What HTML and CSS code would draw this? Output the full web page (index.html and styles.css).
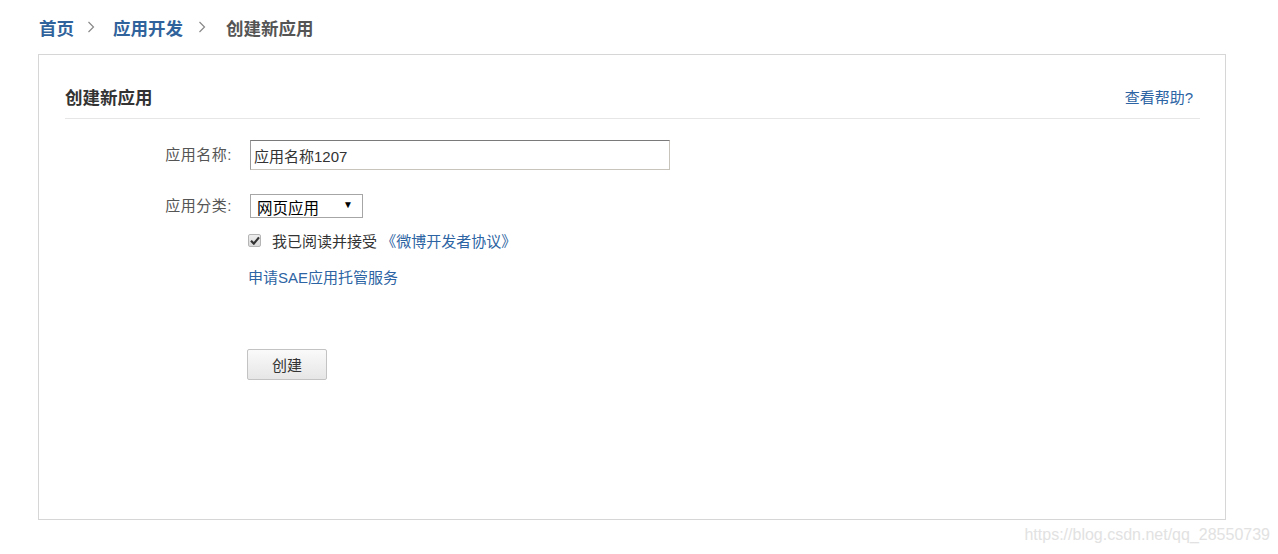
FILE: index.html
```html
<!DOCTYPE html>
<html lang="zh-CN">
<head>
    <meta charset="UTF-8">
    <title>创建新应用</title>
    <link rel="stylesheet" href="styles.css">
</head>
<body>

    <!-- 面包屑 -->
    <div class="crumbs">
        <a href="#">首页</a>
        <svg class="sep" width="8" height="12" viewBox="0 0 8 12">
            <path d="M1.5 1 L6.5 6 L1.5 11" fill="none" stroke="#888" stroke-width="1.2"/>
        </svg>
        <a href="#">应用开发</a>
        <svg class="sep sep-last" width="8" height="12" viewBox="0 0 8 12">
            <path d="M1.5 1 L6.5 6 L1.5 11" fill="none" stroke="#888" stroke-width="1.2"/>
        </svg>
        <span class="current">创建新应用</span>
    </div>

    <div class="panel">
        <div class="panel-head">
            <h3>创建新应用</h3>
            <a href="#" class="help">查看帮助?</a>
        </div>

        <div class="form">
            <label class="lbl">应用名称:</label>
            <div class="field"><input type="text" class="name-input" value="应用名称1207"></div>

            <label class="lbl lbl-select">应用分类:</label>
            <div class="field">
                <div class="fake-select">
                    <span>网页应用</span>
                    <span class="arrow">▼</span>
                </div>
            </div>

            <div></div>
            <div class="agree">
                <span class="check">
                    <svg width="10" height="9" viewBox="0 0 10 9">
                        <path d="M1 4.8 L3.8 7.6 L9 1.4" fill="none" stroke="#333" stroke-width="2.2"/>
                    </svg>
                </span>
                <span>我已阅读并接受 <a href="#">《微博开发者协议》</a></span>
            </div>

            <div></div>
            <div class="sae"><a href="#">申请SAE应用托管服务</a></div>

            <div></div>
            <div class="actions"><button>创建</button></div>
        </div>
    </div>

    <div class="mark">https://blog.csdn.net/qq_28550739</div>

</body>
</html>
```

FILE: styles.css
```css
body {
    margin: 0;
    font-family: "Liberation Sans", "Noto Sans CJK SC", sans-serif;
    font-size: 15px;
    color: #333;
    background: #fff;
}

a {
    color: #2d64a3;
    text-decoration: none;
}

.crumbs {
    height: 54px;
    padding-left: 39px;
    display: flex;
    align-items: center;
    font-size: 17.5px;
    font-weight: bold;
}

.crumbs a {
    color: #30639b;
}

.crumbs .sep {
    margin: 0 18px 0 13px;
}

.crumbs .sep-last {
    margin: 0 20px 0 15px;
}

.crumbs .current {
    color: #555;
}

.panel {
    margin-left: 38px;
    width: 1188px;
    height: 466px;
    border: 1px solid #d6d6d6;
    padding: 0 25px 0 26px;
    box-sizing: border-box;
}

.panel-head {
    margin-top: 31px;
    height: 32px;
    border-bottom: 1px solid #e6e6e6;
    display: flex;
    justify-content: space-between;
    align-items: flex-start;
}

.panel-head h3 {
    margin: 0;
    font-size: 17.5px;
    line-height: 24px;
    color: #333;
}

.help {
    font-size: 15px;
    line-height: 24px;
    margin-right: 7px;
    color: #2d64a3;
}

.form {
    margin-top: 21px;
    display: grid;
    grid-template-columns: 167px 1fr;
    column-gap: 18px;
    align-items: center;
}

.lbl {
    text-align: right;
    color: #555;
    font-size: 15px;
    letter-spacing: 0.5px;
    height: 30px;
    line-height: 30px;
}

.lbl-select {
    margin-top: 24px;
    height: 24px;
    line-height: 24px;
}

.name-input {
    display: block;
    width: 420px;
    height: 30px;
    box-sizing: border-box;
    border: 1px solid #c8c4bc;
    border-top-color: #7a7a7a;
    border-left-color: #9a9a9a;
    padding: 0 3px;
    font-family: "Liberation Sans", "Noto Sans CJK SC", sans-serif;
    font-size: 15px;
    color: #333;
    outline: none;
}

.fake-select {
    margin-top: 24px;
    width: 113px;
    height: 24px;
    box-sizing: border-box;
    border: 1px solid #a6a6a6;
    display: flex;
    align-items: center;
    justify-content: space-between;
    padding: 0 9px 0 6px;
    font-size: 15.5px;
    color: #000;
    line-height: 1;
    overflow: hidden;
}

.fake-select span:first-child {
    margin-top: 6px;
}

.fake-select .arrow {
    font-size: 10px;
    margin-top: -3px;
}

.agree {
    margin-top: 13px;
    margin-left: -2px;
    display: flex;
    align-items: center;
    height: 18px;
    color: #333;
}

.check {
    width: 11px;
    height: 11px;
    border: 1px solid #b5b5b5;
    border-radius: 2px;
    background: linear-gradient(#eee, #d9d9d9);
    display: inline-flex;
    align-items: center;
    justify-content: center;
    margin: 0 11px 0 0;
}

.sae {
    margin-top: 20px;
    margin-left: -2px;
    height: 18px;
    line-height: 18px;
}

.actions {
    margin-top: 62px;
}

.actions button {
    width: 80px;
    height: 31px;
    border: 1px solid #c3c3c3;
    border-radius: 2px;
    background: linear-gradient(#fafafa, #e6e6e6);
    font-family: "Liberation Sans", "Noto Sans CJK SC", sans-serif;
    font-size: 15px;
    color: #333;
    margin-left: -3px;
}

.mark {
    position: absolute;
    right: 8px;
    top: 526px;
    font-size: 16px;
    color: #e2e2e2;
}
```
